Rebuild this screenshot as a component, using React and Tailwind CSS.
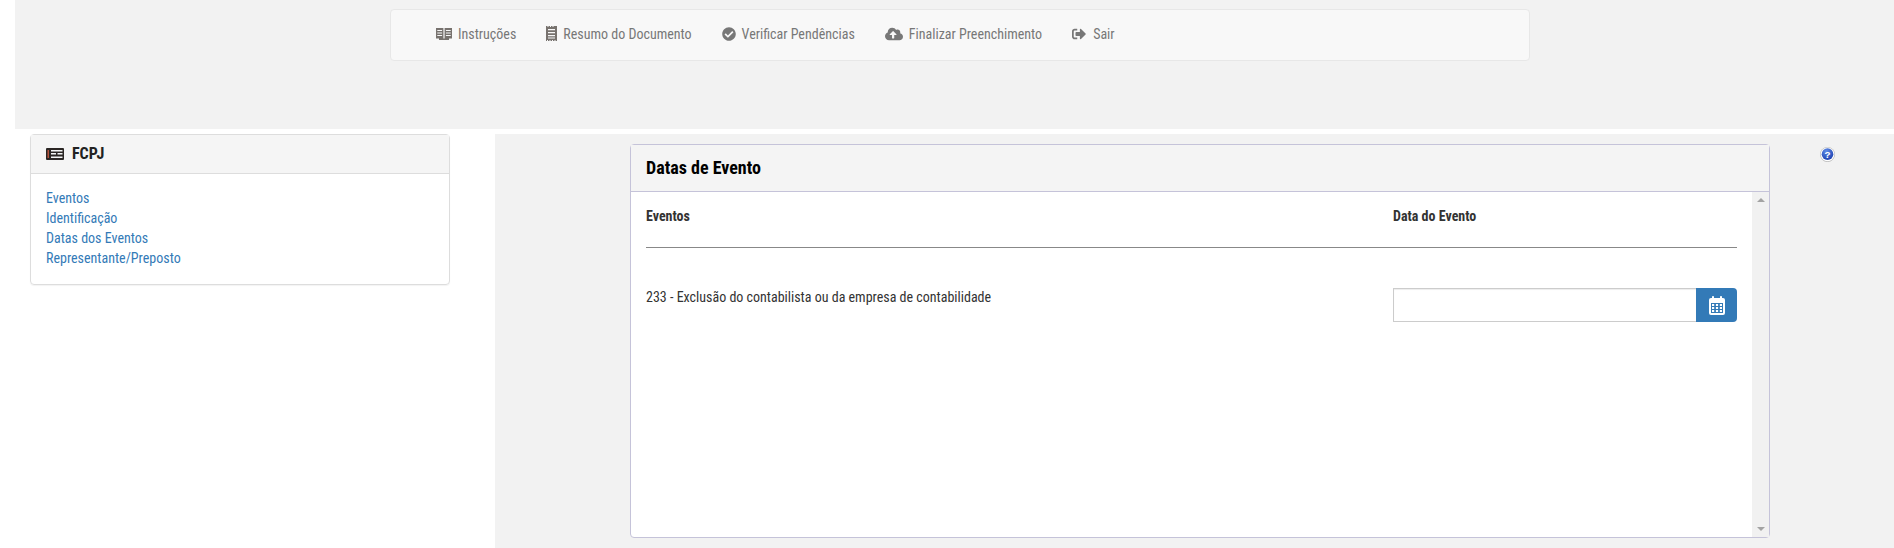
import { FaCheckCircle, FaCloudUploadAlt, FaSignOutAlt } from "react-icons/fa"

const font = "font-['Roboto_Condensed','Roboto',sans-serif]"

function BookIcon() {
  return (
    <svg width="16" height="13" viewBox="0 0 16 13" className="shrink-0">
      <path fill="#77726e" d="M0 1h7.400v10.500H0zM8.600 1H16v10.500H8.600zM3 11.500h10V13H3z" />
      <path fill="#f8f8f8" d="M1.300 3h4.800v1H1.300zM1.300 5.500h4.800v1H1.300zM1.300 8h4.800v1H1.300zM9.900 3h4.800v1H9.900zM9.900 5.500h4.800v1H9.900zM9.900 8h4.800v1H9.900z" />
    </svg>
  )
}

function ReceiptIcon() {
  return (
    <svg width="11" height="15" viewBox="0 0 11 15" className="shrink-0">
      <path fill="#77726e" d="M0 0h1.500v1h1V0h1.500v1h1V0h1.500v1h1V0H11v15H9.500v-1h-1v1H7v-1H6v1H4.500v-1h-1v1H2v-1H1v1H0z" />
      <path fill="#f8f8f8" d="M2 3h7v1.300H2zM2 6h7v1.300H2zM2 9h7v1.300H2zM2 11.500h7v1H2z" />
    </svg>
  )
}

function ListIcon() {
  return (
    <svg width="18" height="12" viewBox="0 0 18 12" className="shrink-0">
      <rect width="18" height="12" rx="1" fill="#2b2624" />
      <path fill="#f5f5f5" d="M5 2h11.500v1.500H5zM5 5h5v1.500H5zM11.500 5h5v1.500h-5zM5 8.500h11.500V10H5z" />
      <path fill="#b5533c" d="M1.500 2H3v8H1.500z" />
    </svg>
  )
}

function CalendarIcon() {
  return (
    <svg width="16" height="19" viewBox="0 0 16 19">
      <rect x="0" y="2" width="16" height="17" rx="2" fill="#fff" />
      <rect x="2" y="7" width="12" height="10" fill="#337ab7" />
      <rect x="3" y="0" width="2" height="4" rx="0.800" fill="#fff" />
      <rect x="11" y="0" width="2" height="4" rx="0.800" fill="#fff" />
      {[3, 6.900, 10.800].map((x) => [8, 11, 14].map((y) => (
        <rect key={x + "-" + y} x={x} y={y} width="2.200" height="2" fill="#fff" />
      )))}
    </svg>
  )
}

function HelpIcon() {
  return (
    <svg width="15" height="15" viewBox="0 0 16 16">
      <defs>
        <radialGradient id="ajuda" cx="40%" cy="25%" r="80%">
          <stop offset="0%" stopColor="#5f8be6" />
          <stop offset="100%" stopColor="#1c3fae" />
        </radialGradient>
      </defs>
      <circle cx="8" cy="8" r="8" fill="#b9b9b9" />
      <circle cx="8" cy="7.800" r="7.300" fill="#fff" />
      <circle cx="8" cy="7.600" r="6.200" fill="url(#ajuda)" />
      <text x="8" y="11.300" textAnchor="middle" fontSize="10.500" fontWeight="700" fill="#fff" fontFamily="Liberation Sans, sans-serif">?</text>
    </svg>
  )
}

const menu = [
  { label: "Instruções", icon: <BookIcon />, gap: "gap-[6px]" },
  { label: "Resumo do Documento", icon: <ReceiptIcon />, gap: "gap-[6px]" },
  { label: "Verificar Pendências", icon: <FaCheckCircle size={14} />, gap: "gap-[6px]" },
  { label: "Finalizar Preenchimento", icon: <FaCloudUploadAlt size={18} />, gap: "gap-[6px]" },
  { label: "Sair", icon: <FaSignOutAlt size={14} />, gap: "gap-[7px]" },
]

export default function App() {
  return (
    <div className={`${font} min-h-[548px] bg-white text-[14px] leading-[20px] text-[#333]`}>
      <div className="ml-[15px] h-[129px] bg-[#f2f2f2] pt-[9px]">
        <nav className="ml-[375px] flex h-[52px] w-[1140px] items-center gap-[30px] rounded border border-[#e7e7e7] bg-[#f8f8f8] pb-[3px] pl-[45px] text-[#777]">
          {menu.map((m) => (
            <a key={m.label} className={`flex items-center ${m.gap}`}>
              {m.icon}
              <span>{m.label}</span>
            </a>
          ))}
        </nav>
      </div>

      <div className="mt-[5px] flex">
        <div className="ml-[30px] h-[151px] w-[420px] shrink-0 rounded border border-[#ddd] shadow-[0_1px_1px_rgba(0,0,0,0.05)]">
          <div className="flex h-[39px] items-center gap-[8px] border-b border-[#ddd] bg-[#f5f5f5] pl-[15px] text-[16px] font-bold text-[#222]">
            <ListIcon />
            <span>FCPJ</span>
          </div>
          <ul className="pl-[15px] pt-[14px] text-[#337ab7]">
            <li>Eventos</li>
            <li>Identificação</li>
            <li>Datas dos Eventos</li>
            <li>Representante/Preposto</li>
          </ul>
        </div>

        <div className="ml-[45px] flex h-[414px] flex-1 bg-[#f2f2f2] pt-[10px]">
          <section className="ml-[135px] flex h-[394px] w-[1140px] flex-col rounded border border-[#c5c3d9] bg-white">
            <h2 className="flex h-[47px] shrink-0 items-center border-b border-[#c5c3d9] bg-[#f4f4f4] pl-[15px] text-[18px] font-bold text-black">
              Datas de Evento
            </h2>
            <div className="flex flex-1">
              <div className="flex-1 pl-[15px] pr-[15px]">
                <div className="flex h-[56px] items-start border-b border-[#888] pt-[14px] font-bold">
                  <span className="flex-1">Eventos</span>
                  <span className="w-[344px]">Data do Evento</span>
                </div>
                <div className="flex items-start pt-[40px]">
                  <p className="-mt-px flex-1">233 - Exclusão do contabilista ou da empresa de contabilidade</p>
                  <div className="flex h-[34px] w-[344px]">
                    <input className="min-w-0 flex-1 border border-r-0 border-[#ccc] bg-white shadow-[inset_0_1px_1px_rgba(0,0,0,0.075)]" />
                    <button className="flex w-[41px] items-center justify-center rounded-r bg-[#337ab7]">
                      <CalendarIcon />
                    </button>
                  </div>
                </div>
              </div>
              <div className="flex w-[17px] flex-col items-center justify-between bg-[#f1f1f1] py-[6px]">
                <span className="h-0 w-0 border-x-[4px] border-b-[4px] border-x-transparent border-b-[#a3a3a3]" />
                <span className="h-0 w-0 border-x-[4px] border-t-[4px] border-x-transparent border-t-[#a3a3a3]" />
              </div>
            </div>
          </section>
          <div className="ml-[50px] pt-[3px]">
            <HelpIcon />
          </div>
        </div>
      </div>
    </div>
  )
}
